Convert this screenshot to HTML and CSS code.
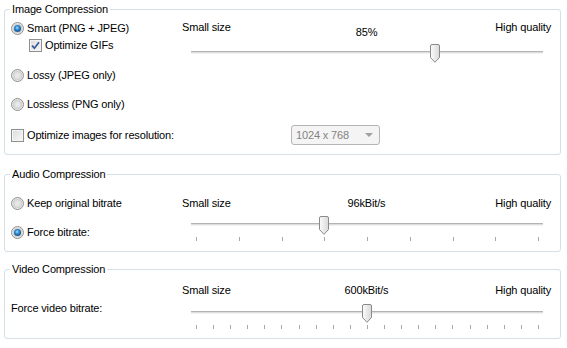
FILE: index.html
```html
<!DOCTYPE html>
<html lang="en">

<head>
    <meta charset="UTF-8">
    <meta name="viewport" content="width=device-width, initial-scale=1.0">
    <title>Compression Settings</title>
    <link rel="stylesheet" href="styles.css">
</head>

<body>

    <fieldset class="group group-image">
        <legend>Image Compression</legend>
        <div class="cols">
            <div class="options">
                <label class="opt opt-smart"><span class="radio checked"></span>Smart (PNG + JPEG)</label>
                <label class="opt opt-gif">
                    <span class="check">
                        <svg width="9" height="9" viewBox="0 0 9 9"><path d="M1 4.6 L3.4 7.2 L8 1.2" fill="none" stroke="#3c5a9a" stroke-width="1.7"/></svg>
                    </span>Optimize GIFs
                </label>
                <label class="opt opt-lossy"><span class="radio"></span>Lossy (JPEG only)</label>
                <label class="opt opt-lossless"><span class="radio"></span>Lossless (PNG only)</label>
            </div>
            <div class="slider-block">
                <div class="labels labels-image">
                    <span>Small size</span>
                    <span class="value">85%</span>
                    <span class="right">High quality</span>
                </div>
                <div class="slider">
                    <div class="track"></div>
                    <div class="thumb" style="left: 239px;">
                        <svg width="10" height="19" viewBox="0 0 10 19"><defs><linearGradient id="tg1" x1="0" y1="0" x2="1" y2="0"><stop offset="0" stop-color="#fbfbfb"/><stop offset="1" stop-color="#d9d9d9"/></linearGradient></defs><path d="M0.5 2 Q0.5 0.5 2 0.5 H8 Q9.5 0.5 9.5 2 V13.5 L5 18.3 L0.5 13.5 Z" fill="url(#tg1)" stroke="#8a8a8a"/></svg>
                    </div>
                </div>
            </div>
        </div>
        <div class="res-row">
            <label class="opt res-label"><span class="check"></span>Optimize images for resolution:</label>
            <div class="select"><span>1024 x 768</span><span class="arrow"></span></div>
        </div>
    </fieldset>

    <fieldset class="group group-audio">
        <legend>Audio Compression</legend>
        <div class="cols">
            <div class="options">
                <label class="opt opt-keep"><span class="radio"></span>Keep original bitrate</label>
                <label class="opt opt-force"><span class="radio checked"></span>Force bitrate:</label>
            </div>
            <div class="slider-block">
                <div class="labels labels-audio">
                    <span>Small size</span>
                    <span class="value">96kBit/s</span>
                    <span class="right">High quality</span>
                </div>
                <div class="slider">
                    <div class="track"></div>
                    <div class="thumb" style="left: 128px;">
                        <svg width="10" height="19" viewBox="0 0 10 19"><defs><linearGradient id="tg2" x1="0" y1="0" x2="1" y2="0"><stop offset="0" stop-color="#fbfbfb"/><stop offset="1" stop-color="#d9d9d9"/></linearGradient></defs><path d="M0.5 2 Q0.5 0.5 2 0.5 H8 Q9.5 0.5 9.5 2 V13.5 L5 18.3 L0.5 13.5 Z" fill="url(#tg2)" stroke="#8a8a8a"/></svg>
                    </div>
                </div>
                <div class="ticks">
                    <i></i><i></i><i></i><i></i><i></i><i></i><i></i><i></i><i></i>
                </div>
            </div>
        </div>
    </fieldset>

    <fieldset class="group group-video">
        <legend>Video Compression</legend>
        <div class="cols">
            <div class="options">
                <div class="opt opt-video">Force video bitrate:</div>
            </div>
            <div class="slider-block">
                <div class="labels labels-video">
                    <span>Small size</span>
                    <span class="value">600kBit/s</span>
                    <span class="right">High quality</span>
                </div>
                <div class="slider">
                    <div class="track"></div>
                    <div class="thumb" style="left: 171px;">
                        <svg width="10" height="19" viewBox="0 0 10 19"><defs><linearGradient id="tg3" x1="0" y1="0" x2="1" y2="0"><stop offset="0" stop-color="#fbfbfb"/><stop offset="1" stop-color="#d9d9d9"/></linearGradient></defs><path d="M0.5 2 Q0.5 0.5 2 0.5 H8 Q9.5 0.5 9.5 2 V13.5 L5 18.3 L0.5 13.5 Z" fill="url(#tg3)" stroke="#8a8a8a"/></svg>
                    </div>
                </div>
                <div class="ticks">
                    <i></i><i></i><i></i><i></i><i></i><i></i><i></i><i></i><i></i><i></i><i></i>
                    <i></i><i></i><i></i><i></i><i></i><i></i><i></i><i></i><i></i><i></i>
                </div>
            </div>
        </div>
    </fieldset>

</body>

</html>
```

FILE: styles.css
```css
body {
    margin: 0;
    padding: 3px 6px 0 4px;
    background: #fff;
    font-family: "Liberation Sans", Arial, sans-serif;
    font-size: 11px;
    letter-spacing: -0.15px;
    color: #000;
}

/* Group boxes */
.group {
    margin: 0;
    padding: 0 9px 0 6px;
    border: 1px solid #d5dfe5;
    border-radius: 3px;
    min-width: 0;
}

.group legend {
    margin-left: -1px;
    padding: 0 2px;
    line-height: 13px;
}

.group-image {
    padding-bottom: 9px;
    margin-bottom: 13px;
}

.group-audio {
    padding-bottom: 10px;
    margin-bottom: 11px;
}

.group-video {
    padding-bottom: 9px;
}

.cols {
    display: flex;
}

.options {
    width: 171px;
    flex: none;
}

/* Radio / checkbox rows */
.opt {
    display: flex;
    align-items: center;
    height: 16px;
    white-space: nowrap;
}

.opt-smart { margin-top: 4px; }
.opt-gif { margin-top: 1px; margin-left: 18px; }
.opt-lossy { margin-top: 14px; }
.opt-lossless { margin-top: 13px; }
.opt-keep { margin-top: 14px; }
.opt-force { margin-top: 13px; }
.opt-video { margin-top: 24px; }

.radio {
    width: 13px;
    height: 13px;
    box-sizing: border-box;
    border: 1px solid #8e8f8f;
    border-radius: 50%;
    margin-right: 3px;
    background: radial-gradient(circle, #ececec 0, #e2e2e2 2.5px, #cfcfcf 4.5px, #f6f6f6 5.5px);
    position: relative;
}

.radio.checked::after {
    content: "";
    position: absolute;
    left: 2px;
    top: 2px;
    width: 7px;
    height: 7px;
    border-radius: 50%;
    background: radial-gradient(circle at 45% 40%, #b6e3fb 0, #3a9be0 1.6px, #1d5c98 3.5px);
}

.check {
    width: 13px;
    height: 13px;
    box-sizing: border-box;
    border: 1px solid #8e8f8f;
    margin-right: 3px;
    background: linear-gradient(135deg, #dcdcdc, #f8f8f8);
    box-shadow: inset 0 0 0 1px #f4f4f4;
    display: flex;
    align-items: center;
    justify-content: center;
}

/* Resolution row */
.res-row {
    display: flex;
    align-items: center;
    margin-top: 13px;
    height: 20px;
}

.res-label {
    width: 280px;
}

.select {
    width: 89px;
    height: 20px;
    box-sizing: border-box;
    border: 1px solid #b5b5b5;
    border-radius: 3px;
    background: #f4f4f4;
    color: #838383;
    padding: 0 6px 0 4px;
    display: flex;
    align-items: center;
    justify-content: space-between;
}

.arrow {
    width: 0;
    height: 0;
    border-left: 4px solid transparent;
    border-right: 4px solid transparent;
    border-top: 4px solid #a0a0a0;
}

/* Sliders */
.slider-block {
    flex: 1;
}

.labels {
    display: grid;
    grid-template-columns: 1fr auto 1fr;
    align-items: start;
    line-height: 13px;
}

.labels .right {
    text-align: right;
}

.labels-image {
    margin-top: 5px;
}

.labels-image .value {
    margin-top: 5px;
}

.labels-audio {
    margin-top: 16px;
}

.labels-video {
    margin-top: 8px;
}

.slider {
    position: relative;
    height: 19px;
    margin: 5px 8px 0 9px;
}

.labels-audio + .slider {
    margin-top: 6px;
}

.labels-video + .slider {
    margin-top: 7px;
}

.track {
    position: absolute;
    left: 0;
    right: 0;
    top: 7px;
    height: 3px;
    background: linear-gradient(#b4b4b4 0 1px, #dddddd 1px 2px, #f3f3f3 2px);
}

.thumb {
    position: absolute;
    top: 0;
    width: 10px;
    height: 19px;
}

.thumb svg {
    display: block;
}

.ticks {
    display: flex;
    justify-content: space-between;
    margin: 2px 8px 0 9px;
    padding: 0 4px 0 5px;
    height: 4px;
}

.ticks i {
    width: 1px;
    background: #a9a9a9;
}
```
